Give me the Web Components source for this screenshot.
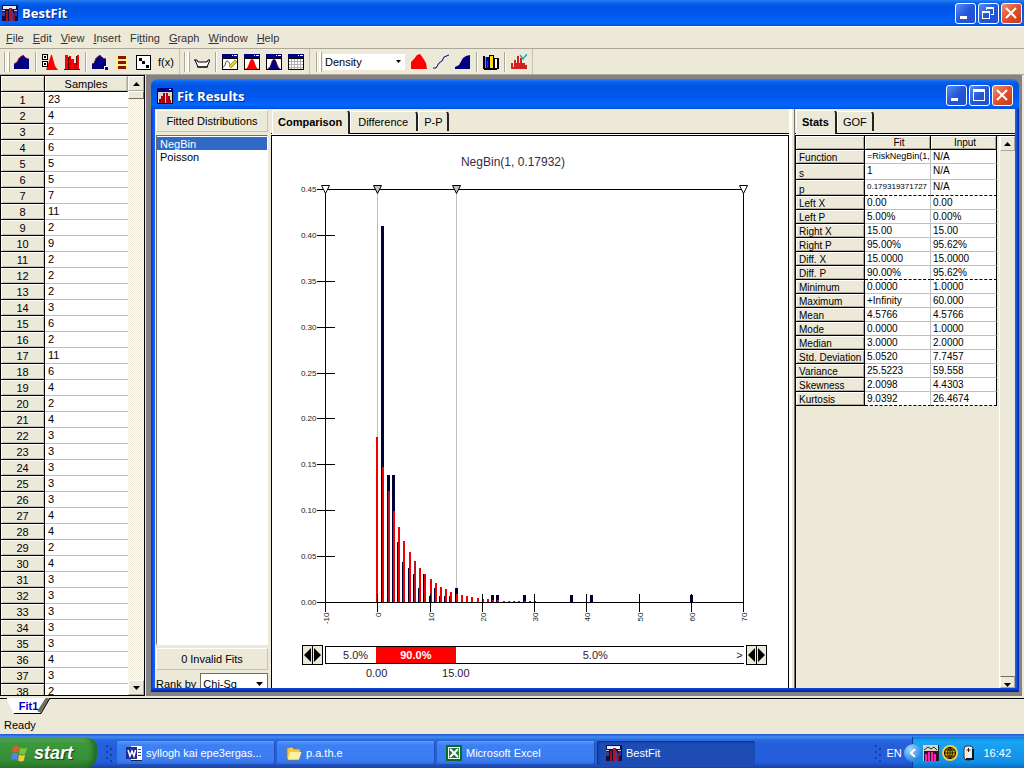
<!DOCTYPE html>
<html lang="en">
<head>
<meta charset="utf-8">
<title>BestFit</title>
<style>
html, body { height: 100%; margin: 0; }
body { font: 11px/14px "Liberation Sans", Arial, sans-serif; color: #000; background: #ece9d8; overflow: hidden; }
</style>
</head>
<body>
<bestfit-desktop></bestfit-desktop>
<script>
const BASE = `
*, *::before, *::after { box-sizing: border-box; }
button, select { font: inherit; color: inherit; margin: 0; padding: 0; border: 0; border-radius: 0; background: none; }
svg { display: block; flex: none; }
`;
function define(name, html) {
  customElements.define(name, class extends HTMLElement {
    connectedCallback() {
      if (this.shadowRoot) return;
      const t = document.createElement('template');
      const body = typeof html === 'function' ? html(this) : html;
      t.innerHTML = `<style>${BASE}</style>` + body;
      this.attachShadow({ mode: 'open' }).append(t.content.cloneNode(true));
    }
  });
}

/* ---------- icons, each on a 16 x 16 board ---------- */
const R = (x, y, w, h, f) => `<rect x="${x}" y="${y}" width="${w}" height="${h}" fill="${f}"/>`;
const frame = R(0, 1, 16, 15, '#000') + R(1, 5, 14, 10, '#fff') + R(0, 0, 16, 4, '#000080') + R(10, 1, 1, 1, '#fff') + R(12, 1, 3, 1, '#fff');
const ICONS = {
  app: R(0, 0, 16, 16, '#101040') + R(1, 1, 13, 3, '#e8e8f0') + R(0, 5, 3, 1, '#c8c8d8') + R(12, 5, 3, 1, '#c8c8d8') + R(3, 4, 2, 12, '#101040') + R(4, 6, 2, 10, '#a01020') + R(7, 3, 3, 13, '#c01020') + R(10, 6, 1, 10, '#4040a0') + R(11, 8, 2, 8, '#901020') + R(0, 7, 3, 4, '#3a3f80') + R(13, 6, 2, 5, '#2030a0'),
  fit: R(0, 0, 16, 16, '#000') + R(1, 4, 14, 11, '#d8d4d0') + R(0, 0, 16, 3, '#000080') + R(12, 1, 2, 1, '#fff') + R(2, 11, 2, 4, '#a00010') + R(4, 8, 2, 7, '#c00010') + R(6, 5, 2, 10, '#a00010') + R(9, 5, 2, 10, '#c00010') + R(11, 8, 2, 7, '#a00010') + R(13, 12, 1, 3, '#c00010'),
  area: `<path d="M0 15V10L3 8L5 4L9 1L12 4L15 5V15Z" fill="#000080"/><path d="M0 10L3 8L5 4L9 1L12 4L15 5" fill="none" stroke="#d01020" stroke-dasharray="2 1"/>`,
  filter: `<path d="M4 16L9 1L10 1L13 12L16 16Z" fill="#f00"/><rect x="0.5" y="0.5" width="5" height="5" fill="#fff" stroke="#000"/><rect x="0.5" y="7.5" width="5" height="5" fill="#fff" stroke="#000"/>` + R(2, 2, 2, 2, '#000') + R(2, 9, 2, 2, '#000'),
  bars: R(1, 1, 3, 14, '#f00') + R(5, 2, 2, 13, '#d00') + R(7, 5, 3, 10, '#f00') + R(10, 9, 3, 6, '#d00') + R(13, 1, 2, 14, '#f00') + R(4, 3, 1, 12, '#600') + R(12, 2, 1, 9, '#600') + R(0, 15, 16, 1, '#500'),
  areaHandle: `<path d="M0 15V10L2 9L4 4L8 1L11 4L14 5V15Z" fill="#000080"/><path d="M0 10L2 9L4 4L8 1L11 4L14 5" fill="none" stroke="#d01020" stroke-dasharray="2 1"/>` + R(12, 12, 4, 4, '#fff') + R(13, 13, 3, 3, '#000080'),
  stack: R(2, 1, 12, 14, '#fff48a') + R(4, 2, 8, 3, '#901010') + R(4, 7, 8, 3, '#901010') + R(4, 12, 8, 3, '#901010'),
  dice: R(0, 1, 15, 15, '#000') + R(1, 2, 13, 13, '#fff') + R(3, 4, 3, 3, '#000') + R(6, 7, 3, 3, '#000') + R(10, 11, 3, 3, '#000'),
  tray: `<path d="M2 8H15L13 12H4Z" fill="#fff"/><path d="M0 6H3L4 8H13L14 6H16M1 6L4 13H13L16 6M3 13H14" fill="none" stroke="#000"/>`,
  edit: frame + `<path d="M1 13C4 13 3 7 5 7S8 11 9 12" fill="none" stroke="#555"/><path d="M7 12L13 6L15 8L9 14Z" fill="#e8d800" stroke="#554400" stroke-width=".5"/>`,
  peakRed: frame + `<path d="M1 15C5 15 5 5 8 5S11 15 15 15Z" fill="#f00"/>`,
  peakBlue: frame + `<path d="M1 15C5 15 5 5 8 5S11 15 15 15Z" fill="#000080"/><path d="M2 14L4 14L5 10L6 7L8 5L10 7L11 11L13 14" fill="none" stroke="#c02030" stroke-dasharray="1 1"/>`,
  table: frame + `<path d="M1 7.5H15M1 10.5H15M1 13.5H15M3.500 5V15M6.500 5V15M9.500 5V15M12.500 5V15" stroke="#b0b0b0" fill="none"/>`,
  density: `<path d="M0 15V8L3 5L6 1L9 0L12 4L15 9L16 15Z" fill="#f00"/>`,
  curve: `<path d="M0 14H3L6 9L9 7L11 3L16 1" fill="none" stroke="#000080"/>`,
  cumul: `<path d="M0 15V13L4 11L8 4L11 2L15 1V15Z" fill="#000080"/>`,
  color: R(0, 2, 2, 13, '#000') + R(2, 3, 4, 11, '#00a') + R(2, 3, 1, 11, '#0cc') + R(6, 1, 5, 13, '#000') + R(7, 2, 3, 12, '#ffe000') + R(11, 4, 5, 11, '#000') + R(12, 5, 2, 9, '#fff') + R(4, 7, 1, 7, '#d00') + R(1, 14, 13, 2, '#000'),
  check: R(0, 9, 2, 6, '#d02020') + R(3, 6, 2, 9, '#d02020') + R(6, 2, 2, 13, '#d02020') + R(9, 4, 2, 11, '#d02020') + R(12, 9, 2, 6, '#d02020') + R(14, 11, 2, 4, '#d02020') + R(0, 13, 16, 2, '#d02020') + R(4, 9, 8, 4, '#d02020') + `<path d="M9 1L12 5L16 0" fill="none" stroke="#2aa" stroke-width="1.500"/>`,
  word: R(5, 1, 11, 15, '#fff') + R(12, 4, 3, 1, '#446') + R(12, 7, 3, 1, '#446') + R(12, 10, 3, 1, '#446') + R(5, 15, 11, 1, '#223') + R(0, 2, 12, 12, '#fff') + R(0, 2, 11, 12, '#1c2c90') + `<path d="M2 5L4 11L6 6L8 11L9.500 5" fill="none" stroke="#fff" stroke-width="1.500"/>`,
  folder: `<path d="M1 3L6 2L8 4H14V7H15L12 15H2L1 13Z" fill="#f0c848" stroke="#a07818" stroke-width=".7"/><path d="M4 7H15.500L13 14.500H2Z" fill="#fff0a0"/>`,
  excel: R(0, 0, 16, 16, '#0a6a28') + R(2, 2, 12, 12, '#fff') + R(3, 3, 10, 10, '#1b7a38') + `<path d="M4 4L12 12M12 4L4 12" stroke="#fff" stroke-width="2"/>`,
  trayChart: R(0, 0, 16, 16, '#d8d4c8') + R(15, 0, 1, 16, '#222') + R(1, 6, 14, 10, '#301030') + R(2, 9, 2, 7, '#f2a') + R(5, 7, 2, 9, '#f2a') + R(8, 7, 2, 9, '#f2a') + R(11, 9, 2, 7, '#f2a') + `<path d="M1 5L5 2L8 4L11 2L14 5" fill="none" stroke="#333"/>`,
  globe: `<circle cx="8" cy="8" r="8" fill="#f0d040"/><circle cx="8" cy="8" r="5.500" fill="#e8b800" stroke="#000"/><path d="M8 2V14M2 8H14M3 5H13M3 11H13M8 2Q3 8 8 14M8 2Q13 8 8 14" fill="none" stroke="#000" stroke-width=".8"/>`,
  mouse: `<rect x="3" y="1" width="9" height="14" rx="3" fill="#eee" stroke="#333"/><path d="M12 4V14H5" fill="none" stroke="#111" stroke-width="2"/><path d="M7.500 3V7M5.500 5H9.500" stroke="#222"/>`
};
const icon = n => `<svg width="16" height="16" viewBox="0 0 16 16" aria-hidden="true">${ICONS[n]}</svg>`;
const arrow = d => `<svg width="7" height="4" viewBox="0 0 7 4" aria-hidden="true"><path d="${d === 'up' ? 'M0 4H7L3.500 0Z' : 'M0 0H7L3.500 4Z'}"/></svg>`;

/* ---------- title bar with its caption buttons ---------- */
const CAPS = {
  min: '<rect x="5" y="13" width="7" height="3"/>',
  max: '<path fill-rule="evenodd" d="M4 4H16V16H4ZM5 7V15H15V7Z"/>',
  restore: '<path fill-rule="evenodd" d="M8 4H16V12H13V11H15V6H9V7H8ZM4 8H12V16H4ZM5 10V15H11V10Z"/>',
  close: '<path d="M5 5L15 15M15 5L5 15" stroke="#fff" stroke-width="2"/>'
};
define('xp-titlebar', el => `
<style>
:host { display: flex; align-items: center; gap: 4px; padding: 0 2px; color: #fff; height: 26px; flex: none;
  background: linear-gradient(#2a80f0 0, #0a62ee 3px, #0054e3 7px, #0058ee 60%, #0066ff 85%, #0050d8 100%); }
:host([child]) { height: 30px; padding: 3px 6px 0; border-radius: 7px 7px 0 0; }
h1 { font: 700 13px/16px "Open Sans", "Noto Sans", sans-serif; margin: 0; flex: 1; text-shadow: 1px 1px #0a2a88; }
.caps { display: flex; gap: 2px; }
.caps button { width: 21px; height: 21px; border: 1px solid #fff; border-radius: 3px; background: linear-gradient(135deg, #5a8cf4, #2456d8 50%, #1d4fd0); }
.caps svg { margin: -1px; fill: #fff; }
.caps .close { background: linear-gradient(135deg, #f09070, #e0502c 50%, #c43c14); }
</style>
${icon(el.getAttribute('icon'))}<h1><slot></slot></h1>
<div class="caps"><button aria-label="Minimize">${cap('min')}</button><button aria-label="Resize">${cap(el.getAttribute('middle'))}</button><button class="close" aria-label="Close">${cap('close')}</button></div>`);
function cap(n) { return `<svg width="21" height="21" viewBox="0 0 21 21">${CAPS[n]}</svg>`; }

define('bf-menubar', `
<style>
:host { display: flex; gap: 9px; align-items: center; height: 23px; padding: 0 6px; flex: none; border-bottom: 1px solid #aca899; border-top: 1px solid #fff; color: #333; }
u { text-underline-offset: 1px; }
</style>
<button><u>F</u>ile</button><button><u>E</u>dit</button><button><u>V</u>iew</button><button><u>I</u>nsert</button><button>Fi<u>t</u>ting</button><button><u>G</u>raph</button><button><u>W</u>indow</button><button><u>H</u>elp</button>`);

define('bf-tool', el => `
<style>:host { display: flex; width: 22px; flex: none; } button { width: 22px; height: 22px; display: grid; place-items: center; }</style>
<button aria-label="${el.title}">${el.getAttribute('icon') ? icon(el.getAttribute('icon')) : '<slot></slot>'}</button>`);

define('bf-toolbar', `
<style>
:host { display: flex; align-items: center; height: 26px; flex: none; padding-left: 4px; border-bottom: 1px solid #aca899; }
section { display: flex; align-items: center; align-self: stretch; border-right: 1px solid #c5c2b2; padding-right: 2px; margin-right: 4px; }
section.last { margin: 0 0 0 2px; }
.grip { width: 6px; height: 20px; margin-right: 1px; border: solid #aca899; border-width: 0 1px; box-shadow: inset 1px 0 #fff, inset -2px 0 #fff; }
.sep { width: 6px; height: 20px; background: linear-gradient(90deg, transparent 2px, #aca899 2px, #aca899 3px, #fff 3px, #fff 4px, transparent 4px); }
.drop { display: grid; align-items: center; width: 82px; height: 16px; margin: 0 3px 0 0; background: #fff; }
.drop > * { grid-area: 1 / 1; }
.drop svg { justify-self: end; margin-right: 4px; pointer-events: none; }
select { appearance: none; width: 100%; height: 16px; padding-left: 2px; }
</style>
<section><div class="grip"></div><bf-tool title="Input data" icon="area"></bf-tool><div class="sep"></div><bf-tool title="Filter" icon="filter"></bf-tool><bf-tool title="Histogram" icon="bars"></bf-tool><div class="sep"></div><bf-tool title="Fit" icon="areaHandle"></bf-tool><bf-tool title="List" icon="stack"></bf-tool><bf-tool title="Sample" icon="dice"></bf-tool><bf-tool title="Function">f(x)</bf-tool></section>
<section><div class="grip"></div><bf-tool title="Tray" icon="tray"></bf-tool><div class="sep"></div><bf-tool title="Edit graph" icon="edit"></bf-tool><bf-tool title="Fit window" icon="peakRed"></bf-tool><bf-tool title="Compare window" icon="peakBlue"></bf-tool><bf-tool title="Table window" icon="table"></bf-tool></section>
<section class="last"><div class="grip"></div><label class="drop"><select aria-label="Graph type"><option>Density</option></select><svg width="5" height="3" viewBox="0 0 5 3"><path d="M0 0H5L2.500 3Z"/></svg></label><bf-tool title="Density" icon="density"></bf-tool><bf-tool title="Curve" icon="curve"></bf-tool><bf-tool title="Cumulative" icon="cumul"></bf-tool><div class="sep"></div><bf-tool title="Colours" icon="color"></bf-tool><div class="sep"></div><bf-tool title="Run fit" icon="check"></bf-tool></section>`);

define('bf-scrollbar', `
<style>
:host { display: flex; flex-direction: column; width: 16px; flex: none; background: repeating-conic-gradient(#fff 0 25%, #ece9d8 0 50%) 0 0 / 2px 2px; }
button, i { display: grid; place-items: center; height: 15px; background: #ece9d8; border: 1px solid; border-color: #fff #aca899 #aca899 #fff; }
i { height: 8px; border-color: #fff #716f64 #716f64 #fff; }
div { flex: 1; }
:host([idle]) { background: #ece9d8; border-left: 1px solid #fff; }
:host([idle]) i { display: none; }
:host([idle]) button:last-child { border-top-color: #716f64; height: 12px; place-items: end center; }
</style>
<button aria-label="Scroll up">${arrow('up')}</button><i></i><div></div><button aria-label="Scroll down">${arrow('down')}</button>`);

const SAMPLES = [23,4,2,6,5,5,7,11,2,9,2,2,2,3,6,2,11,6,4,2,4,3,3,3,3,3,4,4,2,4,3,3,3,3,3,4,3,2];
define('bf-samples', `
<style>
:host { display: flex; width: 145px; flex: none; border: 1px solid #000; overflow: hidden; min-height: 0; height: 100%; }
.rows { flex: 1; overflow: hidden; background: #fff; }
table { border-collapse: separate; border-spacing: 0; width: 100%; table-layout: fixed; }
th, td { height: 16px; padding: 0; line-height: 15px; font-weight: 400; overflow: hidden; }
th { padding-top: 1px; line-height: 14px; background: #ece9d8; border-right: 1px solid #000; border-bottom: 1px solid #000; box-shadow: inset 1px 1px #fff, inset -1px -1px #c5c2b2; }
th:first-child { width: 44px; }
thead th:last-child { border-right-color: #aca899; }
td { border-bottom: 1px solid #c0c0c0; padding-left: 3px; }
</style>
<div class="rows"><table><thead><tr><th aria-label="Row"></th><th>Samples</th></tr></thead><tbody>${SAMPLES.map((v, i) => `<tr><th>${i + 1}</th><td>${v}</td></tr>`).join('')}</tbody></table></div>
<bf-scrollbar></bf-scrollbar>`);

/* ---------- row of property-sheet tabs; the first one is open ---------- */
define('bf-tabs', el => `
<style>
:host { display: flex; align-items: flex-end; height: 27px; padding: 0 0 1px 1px; flex: none; border-bottom: 1px solid #000; box-shadow: inset 0 -1px #fff, inset 0 -2px #000; }
button { height: 20px; margin-bottom: 3px; padding: 0 8px; border: solid; border-width: 1px 2px 0 0; border-color: #fff #222 #222 #fff; border-radius: 0 4px 0 0; box-shadow: inset 1px 0 #fff; white-space: nowrap; }
button.narrow { padding: 0 5px 0 6px; }
button:first-of-type { height: 24px; margin: 0; padding: 0 6px 2px 6px; font-weight: 700; background: #ece9d8; }
</style>${el.getAttribute('names').split(',').map(n => `<button class="${n.length < 5 ? 'narrow' : ''}">${n}</button>`).join('')}`);

define('bf-fitlist', `
<style>
:host { display: flex; flex-direction: column; width: 116px; flex: none; padding: 1px 3px 0 1px; gap: 3px; overflow: hidden; }
.cap { height: 22px; line-height: 20px; flex: none; text-align: center; border: 1px solid; border-color: #fff #c5c2b2 #c5c2b2 #fff; }
.list { flex: 1; background: #fff; border: 1px solid; border-color: #716f64 #fff #fff #716f64; display: flex; flex-direction: column; padding-top: 1px; }
.list button { text-align: left; height: 13px; line-height: 14px; padding-left: 3px; }
.list .on { background: #316ac5; color: #fff; }
.rank { display: flex; height: 15px; gap: 4px; flex: none; overflow: hidden; }
.rank label { line-height: 23px; white-space: nowrap; }
.drop { display: grid; height: 21px; flex: 1; border: 1px solid #716f64; background: #fff; align-items: center; }
.drop > * { grid-area: 1 / 1; }
.drop svg { justify-self: end; margin-right: 4px; pointer-events: none; }
select { appearance: none; width: 100%; padding-left: 2px; }
</style>
<div class="cap">Fitted Distributions</div>
<div class="list"><button class="on">NegBin</button><button>Poisson</button></div>
<div class="cap">0 Invalid Fits</div>
<div class="rank"><label for="rank">Rank by</label><span class="drop"><select id="rank"><option>Chi-Sq</option></select>${arrow('down')}</span></div>`);

/* ---------- comparison plot ---------- */
function plot() {
  const L = 53, T = 53, W = 418, H = 413, B = T + H;
  const X = v => Math.round(L + (v + 10) * W / 80), Y = v => Math.round(B - v * H / 0.45);
  let s = '', guides = '', bars = '';
  const path = (x1, y1, x2, y2, c = '#000') => `<path d="M${x1} ${y1}L${x2} ${y2}" stroke="${c}"/>`;
  const line = (...a) => { s += path(...a); };
  const input = { 1: .41, 2: .138, 3: .138, 4: .065, 5: .044, 6: .037, 7: .03, 8: .015, 9: .03, 10: .007, 11: .015, 12: .007, 13: .007, 14: .007, 15: .015, 22: .008, 23: .008, 28: .008, 37: .008, 41: .008, 60: .008 };
  guides = path(X(0), T, X(0), B, '#c0c0c0') + path(X(15), T, X(15), B, '#c0c0c0');
  for (const k in input) bars += R(X(+k) - 1, Y(input[k]), 3, B - Y(input[k]), '#000038');
  const p = 0.17932;
  for (let k = 0; k < 31; k++) { const y = Math.min(B - 1, Y(p * Math.pow(1 - p, k))); bars += R(X(k) - (k ? 0 : 1), y, 2, B - y, k === 2 || k === 7 ? '#b01828' : '#f00000'); }
  for (let i = 0; i < 10; i++) {
    const v = i * 0.05, y = Y(v);
    if (i) line(44, y, 62, y);
    s += `<text x="44" y="${y + 2}" text-anchor="end">${v.toFixed(2)}</text>`;
  }
  for (let v = -10; v <= 70; v += 10) {
    const x = X(v); line(x, v > -10 && v < 70 ? B - 9 : B, x, B + 9);
    s += `<text transform="translate(${x + 3} ${B + 10}) rotate(-90)" text-anchor="end">${v}</text>`;
  }
  line(44, T, L + W, T); line(44, B, L + W, B); line(L, T, L, B); line(L + W, T, L + W, B);
  for (const [v, f] of [[-10, '#fff'], [0, '#c0c0c0'], [15, '#c0c0c0'], [70, '#fff']]) s += `<path d="M${X(v) - 4} ${T - 4}H${X(v) + 4}L${X(v)} ${T + 4}Z" fill="${f}" stroke="#000" shape-rendering="auto"/>`;
  return `<g transform="translate(.5 .5)">${guides}</g>${bars}<g transform="translate(.5 .5)">${s}</g>`;
}
const lr = '<svg width="19" height="18" viewBox="0 0 19 18"><path d="M1 9L8 2V16ZM18 9L11 2V16Z"/><path d="M9.500 0V18" stroke="#000"/></svg>';
define('bf-chart', `
<style>
:host { display: block; flex: 1; min-height: 0; overflow: hidden; background: #fff; border: solid #000; border-width: 0 1px; color: #281838; }
.plot { width: 100%; height: auto; font: 8px "Liberation Sans", Arial, sans-serif; fill: #222; shape-rendering: crispEdges; }
.plot .title { font-size: 12px; fill: #3a2848; }
.delim { display: grid; grid-template-columns: 21px 1fr 21px; gap: 0 2px; padding: 0 21px 0 30px; align-items: center; }
.delim button { height: 20px; border: 1px solid #000; background: #ece9d8; }
.bar, .labels { display: flex; text-align: center; }
.bar { height: 18px; line-height: 16px; border: solid #000; border-width: 1px 0 1px 1px; }
.bar div, .labels div { flex: 79 1 0; min-width: 0; white-space: nowrap; }
.bar .lo { flex-grow: 51; text-align: right; padding-right: 8px; flex-basis: -8px; }
.bar .mid { background: #f00; color: #fff; font-weight: 700; }
.bar .lo { box-sizing: border-box; width: 12%; flex: none; }
.bar .hi { flex-grow: 278; }
.bar .end { flex-grow: 9; }
.labels { grid-column: 2; line-height: 16px; }
.labels .a { flex-grow: 12; }
.labels .z { flex-grow: 248; }
</style>
<svg class="plot" viewBox="0 0 516 509"><text class="title" x="241" y="30" text-anchor="middle">NegBin(1, 0.17932)</text>${plot()}</svg>
<div class="delim"><button aria-label="Move left delimiter">${lr}</button><div class="bar"><div class="lo">5.0%</div><div class="mid">90.0%</div><div class="hi">5.0%</div><div class="end">&gt;</div></div><button aria-label="Move right delimiter">${lr}</button>
<div class="labels"><div class="a"></div><div>0.00</div><div>15.00</div><div class="z"></div></div></div>`);

const STATS = [['Function','=RiskNegBin(1,','N/A','long'],['s','1','N/A','tall'],['p','0.179319371727','N/A','tall cut long'],['Left X','0.00','0.00'],['Left P','5.00%','0.00%'],['Right X','15.00','15.00'],['Right P','95.00%','95.62%'],['Diff. X','15.0000','15.0000'],['Diff. P','90.00%','95.62%','cut'],['Minimum','0.0000','1.0000'],['Maximum','+Infinity','60.000'],['Mean','4.5766','4.5766'],['Mode','0.0000','1.0000'],['Median','3.0000','2.0000'],['Std. Deviation','5.0520','7.7457'],['Variance','25.5223','59.558'],['Skewness','2.0098','4.4303'],['Kurtosis','9.0392','26.4674','cut']];
define('bf-stats', `
<style>
:host { display: flex; flex: 1; min-height: 0; justify-content: space-between; border-left: 1px solid #000; overflow: hidden; font-size: 10px; }
table { border-collapse: separate; border-spacing: 0; table-layout: fixed; width: 201px; align-self: flex-start; }
th, td { height: 14px; padding: 0 0 0 3px; line-height: 13px; font-weight: 400; text-align: left; white-space: nowrap; overflow: hidden; }
th { background: #ece9d8; border: solid #000; border-width: 0 1px 1px 0; box-shadow: inset 1px 1px #fff, inset -1px -1px #aca899; }
th:first-child { width: 69px; }
thead th { text-align: center; }
tbody th { padding-top: 2px; line-height: 11px; }
td { background: #fff; border: solid #c0c0c0; border-width: 0 1px 1px 0; padding-left: 2px; }
td:last-child { border-right-color: #000; }
.long td:nth-child(2) { font-size: 9px; }
.tall.long td:nth-child(2) { font-size: 8px; }
.tall > * { height: 16px; vertical-align: top; }
.tall th { vertical-align: bottom; }
.cut td { border-bottom: 1px dashed #000; }
</style>
<table><thead><tr><th aria-label="Statistic"></th><th>Fit</th><th>Input</th></tr></thead><tbody>${STATS.map(r => `<tr class="${r[3] || ''}"><th>${r[0]}</th><td>${r[1]}</td><td>${r[2]}</td></tr>`).join('')}</tbody></table>
<bf-scrollbar idle></bf-scrollbar>`);

define('bf-fit-window', `
<style>
:host { display: flex; flex-direction: column; flex: 1; min-width: 0; min-height: 0; border-radius: 8px 8px 0 0; background: linear-gradient(90deg, #0831d9, #1660f0 3px, #1660f0 calc(100% - 3px), #001ea0); }
.body { display: flex; flex: 1; min-height: 0; margin: 0 4px; background: #ece9d8; }
.foot { height: 4px; flex: none; background: linear-gradient(#1248dc, #001ea0); }
.mid, .right { display: flex; flex-direction: column; min-width: 0; }
.mid { flex: 1; }
.right { width: 221px; flex: none; border-left: 1px solid #716f64; }
.gap { width: 5px; flex: none; background: linear-gradient(90deg, #fff 3px, #ece9d8 3px); }
</style>
<xp-titlebar child icon="fit" middle="max">Fit Results</xp-titlebar>
<div class="body"><bf-fitlist></bf-fitlist>
<div class="mid"><bf-tabs names="Comparison,Difference,P-P"></bf-tabs><bf-chart></bf-chart></div><div class="gap"></div>
<div class="right"><bf-tabs names="Stats,GOF"></bf-tabs><bf-stats></bf-stats></div></div>
<div class="foot"></div>`);

define('bf-sheets', `
<style>
:host { display: block; height: 38px; flex: none; padding-top: 2px; background: #ece9d8; }
.strip { border-top: 1px solid #000; height: 17px; padding-left: 7px; }
button { display: grid; width: 43px; height: 16px; margin-top: -1px; place-items: center; font-weight: 700; color: #0000c8; line-height: 12px; }
button > * { grid-area: 1 / 1; }
p { margin: 0; padding: 3px 4px; }
</style>
<div class="strip"><button><svg width="43" height="16" viewBox="0 0 43 16"><path d="M0 0H43L34 15H7Z" fill="#fff"/><path d="M41 0L32 14" stroke="#716f64" stroke-width="4"/><path d="M43 0L34 15.500H7L0 0" fill="none" stroke="#000"/><path d="M0 0L7 15" stroke="#fff" stroke-width="2"/></svg><span>Fit1</span></button></div><p>Ready</p>`);

define('xp-task', el => `
<style>
:host { display: block; flex: 0 1 158px; min-width: 0; }
button { display: flex; align-items: center; gap: 4px; width: 100%; height: 24px; padding: 0 9px; color: #fff; border-radius: 2px; text-align: left; white-space: nowrap;
  background: linear-gradient(#5c9af8, #3c80f4 4px, #3a7cf0 80%, #2c68dc); box-shadow: inset -1px -1px #2050b8; }
:host([active]) button { background: #1c4cb4; box-shadow: inset 1px 1px 2px #0c2c80; }
</style><button>${icon(el.getAttribute('icon'))}<span><slot></slot></span></button>`);

const dots = '<svg width="6" height="20" viewBox="0 0 6 20" aria-hidden="true"><path d="M0 1h2v2H0zM4 4h2v2H4zM0 7h2v2H0zM4 10h2v2H4zM0 13h2v2H0zM4 16h2v2H4z" fill="#123ea8"/></svg>';
define('xp-taskbar', `
<style>
:host { display: flex; height: 34px; flex: none; color: #fff; background: linear-gradient(#1f58cc 0, #3f8cf0 3px, #2a66e0 6px, #245edb 12px, #245edb 28px, #1941a5 34px); }
.start { display: flex; align-items: center; gap: 6px; width: 97px; height: 30px; margin: 4px 9px 0 0; padding-left: 11px; flex: none; font: italic 700 18px/22px "Liberation Sans", Arial, sans-serif; color: #fff; text-shadow: 1px 1px 1px #143c14; border-radius: 0 9px 12px 0;
  background: linear-gradient(#6cb86a, #3c9a3c 5px, #388e38 70%, #2a7a2a); box-shadow: inset -4px 0 5px #226a26; }
.dots { padding-top: 10px; width: 11px; flex: none; }
nav { display: flex; gap: 2px; flex: 1; min-width: 0; padding-top: 7px; }
.lang { padding: 12px 0 0 0; width: 18px; }
.more { width: 18px; height: 18px; margin: 10px -9px 0 0; z-index: 1; border-radius: 50%; background: radial-gradient(circle at 35% 30%, #a0d8ff, #2a86e0 70%); display: grid; place-items: center; }
.tray { display: flex; align-items: center; gap: 3px; padding: 0 13px 0 10px; margin-top: 3px; background: linear-gradient(#0a80d8, #18a4f4 4px, #1290e8 80%, #0c6cc4); box-shadow: -1px 0 #0c3c98; }
time { padding-left: 3px; }
</style>
<button class="start"><svg width="17" height="17" viewBox="0 0 17 17"><path d="M2 2Q5 0 8 2L7 8Q4 6 1 8Z" fill="#e8582c"/><path d="M9 2.500Q12 4.500 16 2.500L14.500 8.500Q11 10.500 8 8.500Z" fill="#7cc43c"/><path d="M1 9Q4 7 7 9L6 15Q3 13 0 15Z" fill="#4c88f0"/><path d="M8 9.500Q11 11.500 14 9.500L13 15.500Q10 17.500 7 15.500Z" fill="#f8c83c"/></svg>start</button>
<div class="dots">${dots}</div>
<nav><xp-task icon="word">syllogh kai epe3ergas...</xp-task><xp-task icon="folder">p.a.th.e</xp-task><xp-task icon="excel">Microsoft Excel</xp-task><xp-task icon="app" active>BestFit</xp-task></nav>
<div class="dots">${dots}</div><div class="lang">EN</div>
<button class="more" aria-label="Show hidden icons"><svg width="6" height="8" viewBox="0 0 6 8"><path d="M5 0L1 4L5 8" fill="none" stroke="#fff" stroke-width="2"/></svg></button>
<div class="tray">${icon('trayChart')}${icon('globe')}${icon('mouse')}<time>16:42</time></div>`);

define('bestfit-desktop', `
<style>
:host { display: flex; flex-direction: column; height: 100vh; background: #ece9d8; }
main { display: flex; flex: 1; min-height: 0; }
.mdi { display: flex; flex: 1; min-width: 0; margin: 0 2px 0 1px; padding: 4px 3px 4px 5px; background: #848284; }
</style>
<xp-titlebar icon="app" middle="restore">BestFit</xp-titlebar>
<bf-menubar></bf-menubar><bf-toolbar></bf-toolbar>
<main><bf-samples></bf-samples><div class="mdi"><bf-fit-window></bf-fit-window></div></main>
<bf-sheets></bf-sheets><xp-taskbar></xp-taskbar>`);
</script>
</body>
</html>
